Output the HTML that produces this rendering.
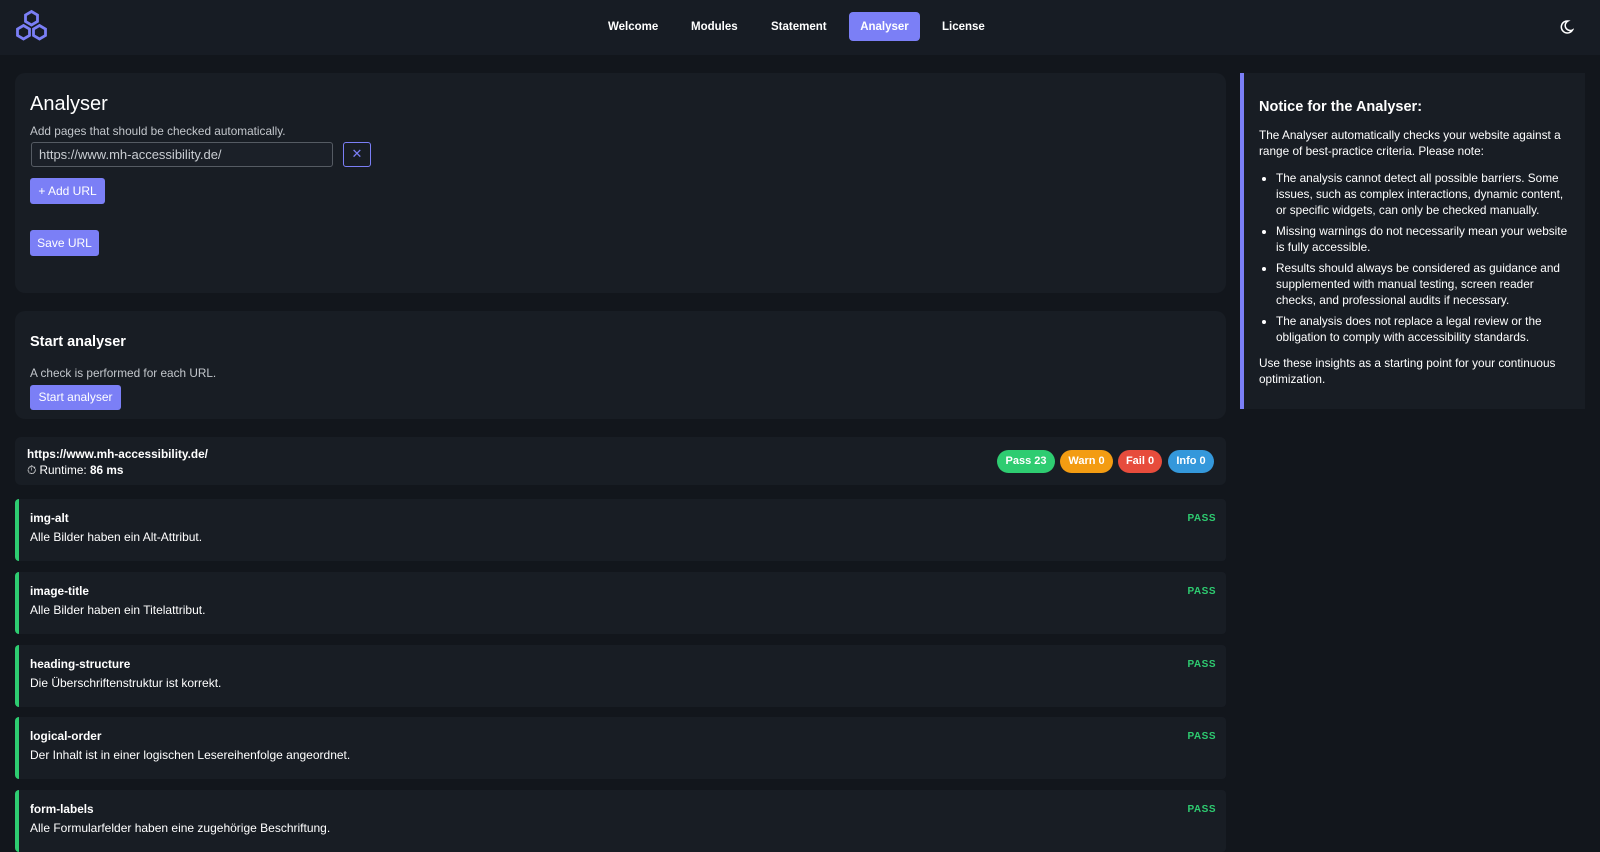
<!DOCTYPE html>
<html><head><meta charset="utf-8"><style>
*{box-sizing:border-box;margin:0;padding:0}
body{width:1600px;height:835px;overflow:hidden;background:#12161c;font-family:"Liberation Sans",sans-serif;color:#e6e8eb;position:relative}
.hdr{position:absolute;left:0;top:0;width:1600px;height:55px;background:#171c24}
.nav a{position:absolute;top:12px;height:29px;line-height:31px;font-size:11.5px;font-weight:bold;color:#fff;text-decoration:none}
.card{position:absolute;background:#181d24;border-radius:10px}
.btn{position:absolute;background:#7b7ff6;color:#fff;font-size:12px;border-radius:3px;text-align:center}
.item{position:absolute;left:15px;width:1211px;height:62px;background:#181d24;border-left:4px solid #2ecc71;border-radius:4px}
.item b{position:absolute;left:11px;top:12px;font-size:11.8px;color:#fff}
.item span{position:absolute;left:11px;top:31px;font-size:12px;color:#fff}
.item i{position:absolute;right:10px;top:14px;font-size:10px;font-weight:bold;font-style:normal;color:#2ecc71;letter-spacing:.5px}
.badge{position:absolute;top:450px;height:23px;line-height:23px;border-radius:12px;color:#fff;font-size:11px;font-weight:bold;text-align:center}
.note{position:absolute;left:1240px;top:73px;width:345px;height:336px;background:#181d24;border-left:4px solid #7b7ff6;padding:26px 12px 0 15px;font-size:11.8px;line-height:16px;color:#fff}
.note h3{font-size:14.5px;margin-bottom:12px}
.note ul{margin:11px 0 10px 17px}
.note li{margin-bottom:5px}
</style></head><body>
<div class="hdr">
<svg style="position:absolute;left:14px;top:9px" width="36" height="36" viewBox="0 0 36 36" fill="none" stroke="#7b7ff6" stroke-width="2.8"><path d="M17.5 2.5l6 3.5v6.5l-6 3.5-6-3.5V6z"/><path d="M9.5 16.5l6 3.5v6.5l-6 3.5-6-3.5V20z"/><path d="M25.5 16.5l6 3.5v6.5l-6 3.5-6-3.5V20z"/></svg>
<div class="nav">
<a style="left:608px">Welcome</a><a style="left:691px">Modules</a><a style="left:771px">Statement</a>
<a style="left:849px;width:71px;background:#7b7ff6;border-radius:4px;text-align:center">Analyser</a>
<a style="left:942px">License</a></div>
<svg style="position:absolute;left:1558px;top:19px" width="16" height="16" viewBox="0 0 16 16" fill="none" stroke="#fff" stroke-width="1.5"><path d="M10 2a6 6 0 1 0 4.5 9A5 5 0 0 1 10 2z"/></svg>
</div>
<div class="card" style="left:15px;top:73px;width:1211px;height:220px"></div>
<div style="position:absolute;left:30px;top:93px;font-size:20px;color:#fff">Analyser</div>
<div style="position:absolute;left:30px;top:124px;font-size:11.8px;color:#c3c7cc">Add pages that should be checked automatically.</div>
<div style="position:absolute;left:31px;top:142px;width:302px;height:25px;border:1px solid #555b63;border-radius:3px;background:#1b2028;font-size:13px;color:#c9cdd2;padding:4px 7px">https://www.mh-accessibility.de/</div>
<div style="position:absolute;left:343px;top:142px;width:28px;height:25px;border:1px solid #7b7ff6;border-radius:3px;color:#7b7ff6;text-align:center;line-height:22px;font-size:13px">✕</div>
<div class="btn" style="left:30px;top:178px;width:75px;height:26px;line-height:26px">+ Add URL</div>
<div class="btn" style="left:30px;top:230px;width:69px;height:26px;line-height:26px">Save URL</div>
<div class="card" style="left:15px;top:311px;width:1211px;height:108px"></div>
<div style="position:absolute;left:30px;top:334px;font-size:14.5px;font-weight:bold;color:#fff">Start analyser</div>
<div style="position:absolute;left:30px;top:366px;font-size:11.8px;color:#c3c7cc">A check is performed for each URL.</div>
<div class="btn" style="left:30px;top:385px;width:91px;height:25px;line-height:25px">Start analyser</div>
<div class="card" style="left:15px;top:437px;width:1211px;height:48px;border-radius:6px"></div>
<div style="position:absolute;left:27px;top:447px;font-size:11.8px;font-weight:bold;color:#fff">https://www.mh-accessibility.de/</div>
<div style="position:absolute;left:27px;top:463px;font-size:11.8px;color:#fff">⏱ Runtime: <b>86 ms</b></div>
<div class="badge" style="left:997px;width:58px;background:#2ecc71">Pass 23</div>
<div class="badge" style="left:1060px;width:53px;background:#f39c12">Warn 0</div>
<div class="badge" style="left:1118px;width:44px;background:#e74c3c">Fail 0</div>
<div class="badge" style="left:1168px;width:46px;background:#3498db">Info 0</div>
<div class="item" style="top:499px"><b>img-alt</b><span>Alle Bilder haben ein Alt-Attribut.</span><i>PASS</i></div>
<div class="item" style="top:572px"><b>image-title</b><span>Alle Bilder haben ein Titelattribut.</span><i>PASS</i></div>
<div class="item" style="top:645px"><b>heading-structure</b><span>Die Überschriftenstruktur ist korrekt.</span><i>PASS</i></div>
<div class="item" style="top:717px"><b>logical-order</b><span>Der Inhalt ist in einer logischen Lesereihenfolge angeordnet.</span><i>PASS</i></div>
<div class="item" style="top:790px"><b>form-labels</b><span>Alle Formularfelder haben eine zugehörige Beschriftung.</span><i>PASS</i></div>
<div class="note"><h3>Notice for the Analyser:</h3>
<p>The Analyser automatically checks your website against a range of best-practice criteria. Please note:</p>
<ul><li>The analysis cannot detect all possible barriers. Some issues, such as complex interactions, dynamic content, or specific widgets, can only be checked manually.</li>
<li>Missing warnings do not necessarily mean your website is fully accessible.</li>
<li>Results should always be considered as guidance and supplemented with manual testing, screen reader checks, and professional audits if necessary.</li>
<li>The analysis does not replace a legal review or the obligation to comply with accessibility standards.</li></ul>
<p>Use these insights as a starting point for your continuous optimization.</p></div>
</body></html>
